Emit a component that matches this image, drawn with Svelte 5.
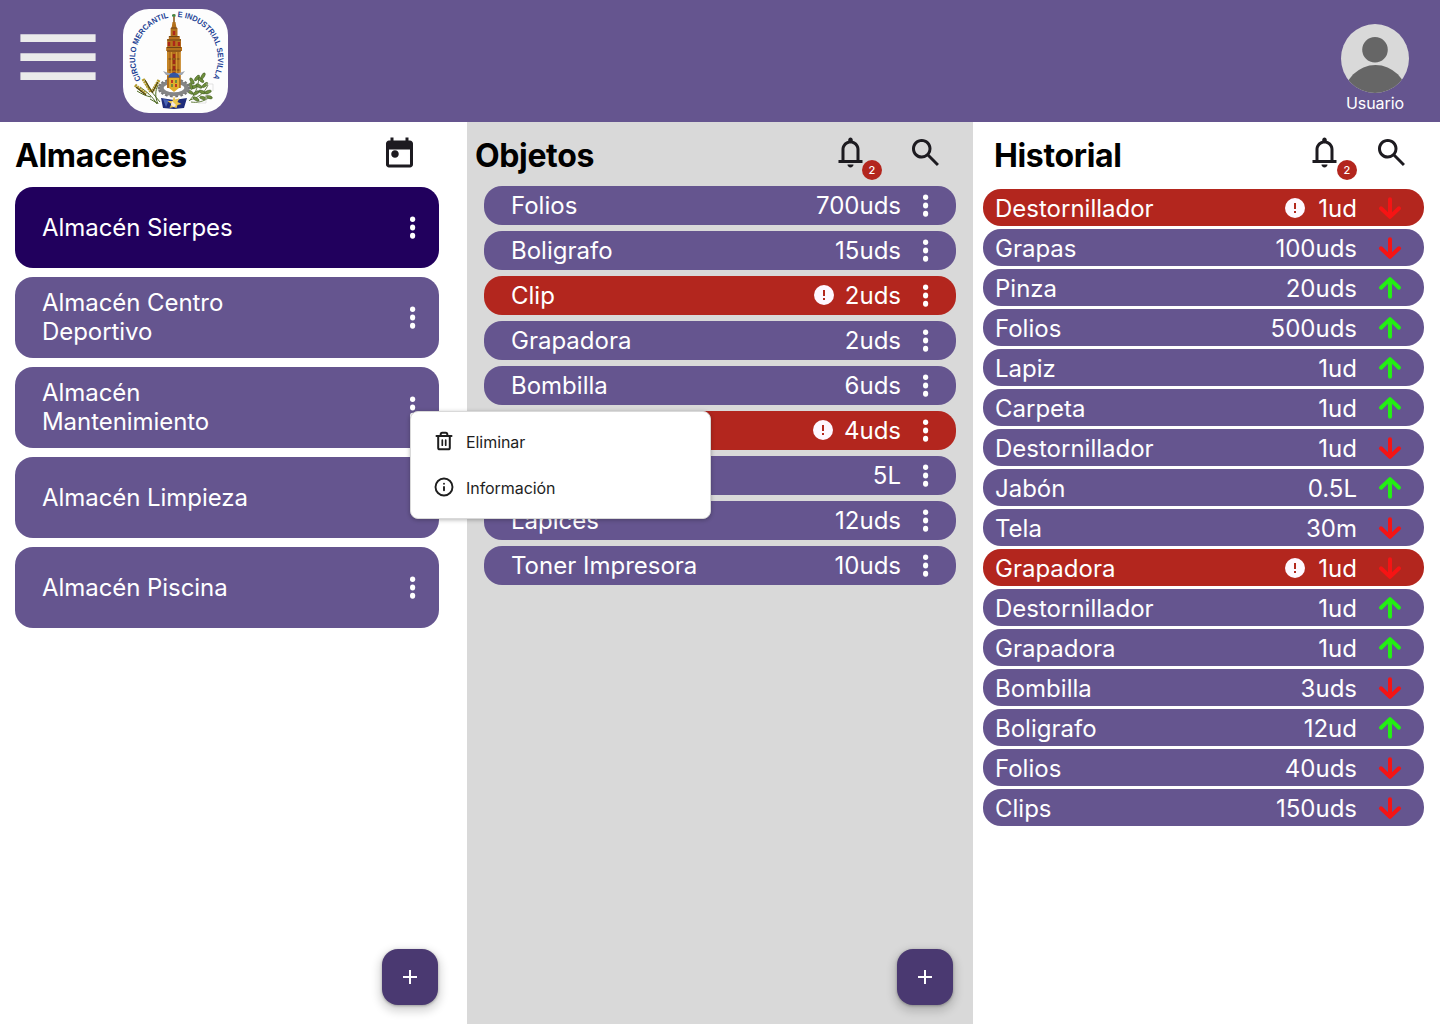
<script>
  const stores = [
    { name: 'Almacén Sierpes', active: true },
    { name: 'Almacén Centro Deportivo' },
    { name: 'Almacén Mantenimiento' },
    { name: 'Almacén Limpieza' },
    { name: 'Almacén Piscina' }
  ];
  const items = [
    ['Folios', '700uds'],
    ['Boligrafo', '15uds'],
    ['Clip', '2uds', true],
    ['Grapadora', '2uds'],
    ['Bombilla', '6uds'],
    ['', '4uds', true],
    ['', '5L'],
    ['Lapices', '12uds'],
    ['Toner Impresora', '10uds']
  ];
  const history = [
    ['Destornillador', '1ud', 'down', true],
    ['Grapas', '100uds', 'down'],
    ['Pinza', '20uds', 'up'],
    ['Folios', '500uds', 'up'],
    ['Lapiz', '1ud', 'up'],
    ['Carpeta', '1ud', 'up'],
    ['Destornillador', '1ud', 'down'],
    ['Jabón', '0.5L', 'up'],
    ['Tela', '30m', 'down'],
    ['Grapadora', '1ud', 'down', true],
    ['Destornillador', '1ud', 'up'],
    ['Grapadora', '1ud', 'up'],
    ['Bombilla', '3uds', 'down'],
    ['Boligrafo', '12ud', 'up'],
    ['Folios', '40uds', 'down'],
    ['Clips', '150uds', 'down']
  ];
  const teeth = Array.from({ length: 18 }, (_, i) => i * 20);
  const leaves = [
    [69, 72, 60], [74, 69, -50], [78, 71, 40], [71, 78, -20], [76, 77, 30], [82, 76, -40],
    [67, 83, 30], [73, 84, -30], [79, 83, 20], [85, 83, -20], [80, 89, 15], [73, 90, 30],
    [86, 88, 20], [68, 77, 80], [80, 67, -60]
  ];
</script>

{#snippet dots()}
  <svg class="dots" width="8" height="24" viewBox="0 0 8 24" fill="#fff">
    <ellipse cx="3.6" cy="3.3" rx="2.6" ry="2.7" />
    <ellipse cx="3.6" cy="11.6" rx="2.6" ry="3" />
    <ellipse cx="3.6" cy="19.8" rx="2.6" ry="3" />
  </svg>
{/snippet}

{#snippet alert()}
  <svg class="alert" width="24" height="24" viewBox="0 0 24 24">
    <circle cx="12" cy="12" r="10" fill="#fef7ff" />
    <path d="M11 7h2v6h-2zM11 15h2v2h-2z" fill="#b3261e" />
  </svg>
{/snippet}

{#snippet tools()}
  <div class="tools">
    <div class="bell">
      <svg width="36" height="36" viewBox="-.33 -.33 24 24" fill="#1d1b20">
        <path d="M4 19v-2h2v-7c0-1.38.42-2.61 1.25-3.69C8.08 5.24 9.17 4.53 10.5 4.2v-.7c0-.42.15-.77.44-1.06.29-.29.64-.44 1.06-.44s.77.15 1.06.44c.29.29.44.64.44 1.06v.7c1.33.33 2.42 1.04 3.25 2.11C17.58 7.39 18 8.62 18 10v7h2v2H4Zm8 3c-.55 0-1.02-.2-1.41-.59C10.2 21.02 10 20.55 10 20h4c0 .55-.2 1.02-.59 1.41-.39.39-.86.59-1.41.59ZM8 17h8v-7c0-1.1-.39-2.04-1.18-2.83C14.04 6.39 13.1 6 12 6s-2.04.39-2.83 1.17C8.39 7.96 8 8.9 8 10v7Z" />
      </svg>
      <span class="badge">2</span>
    </div>
    <svg class="search" width="36" height="36" viewBox="-.33 -.33 24 24" fill="#1d1b20">
      <path d="m19.6 21-6.3-6.3A6.1 6.1 0 0 1 9.5 16c-1.82 0-3.35-.63-4.61-1.89S3 11.32 3 9.5s.63-3.35 1.89-4.61S7.68 3 9.5 3s3.35.63 4.61 1.89S16 7.68 16 9.5a6.1 6.1 0 0 1-1.3 3.8l6.3 6.3-1.4 1.4ZM9.5 14c1.25 0 2.31-.44 3.19-1.31C13.56 11.81 14 10.75 14 9.5s-.44-2.31-1.31-3.19C11.81 5.44 10.75 5 9.5 5s-2.31.44-3.19 1.31C5.44 7.19 5 8.25 5 9.5s.44 2.31 1.31 3.19C7.19 13.56 8.25 14 9.5 14Z" />
    </svg>
  </div>
{/snippet}

{#snippet fab()}
  <button class="fab" aria-label="Añadir">
    <svg width="24" height="24" viewBox="0 0 24 24"><path d="M11 5h2v6h6v2h-6v6h-2v-6H5v-2h6z" fill="#fff" /></svg>
  </button>
{/snippet}

<div class="app">
  <header>
    <svg class="burger" width="76" height="46" viewBox="0 0 76 46" fill="#ebebeb">
      <path d="M.4.2h75.2v7.7H.4zM.4 19.2h75.2v7.7H.4zM.4 38.2h75.2v7.7H.4z" />
    </svg>
    <div class="logo">
      <svg width="105" height="104" viewBox="0 0 105 104">
        <defs>
          <path id="arc-left" d="M18 70.6A41.4 41.4 0 0 1 46.6 8.6" />
          <path id="arc-right" d="M54.6 8.2A41.4 41.4 0 0 1 89.2 70.4" />
        </defs>
        <g font-family="Liberation Sans, sans-serif" font-weight="700" font-size="8" fill="#1c3f94">
          <text textLength="79" lengthAdjust="spacingAndGlyphs"><textPath href="#arc-left">CIRCULO MERCANTIL</textPath></text>
          <text textLength="84" lengthAdjust="spacingAndGlyphs"><textPath href="#arc-right">E INDUSTRIAL SEVILLA</textPath></text>
        </g>
        <!-- wheat on the left -->
        <g fill="none" stroke="#4e6a22" stroke-width="1">
          <path d="M17 78c7 5 12 9 17 17M23 75c5 7 9 12 14 18M35 76c-3 6-3 12 0 19M27 90l7 4M14 82c5 3 9 5 14 6" />
          <path d="M12 76l11 9M20 70l8 13M36 71l-7 12" stroke="#b39a2a" stroke-width="3.2" stroke-dasharray="2 .6" />
          <path d="M13 78l10 8M22 71l7 12M35 73l-6 11" stroke="#4b4312" stroke-width="1.1" />
        </g>
        <!-- olive branch on the right -->
        <path d="M66 92c5-5 9-12 10-24M67 91c7-2 14-6 18-15M68 93c6 1 12 0 19-5" fill="none" stroke="#55702b" stroke-width=".9" />
        {#each leaves as [x, y, r]}
          <ellipse cx={x} cy={y} rx="3.5" ry="1.5" transform="rotate({r} {x} {y})" fill="#6f8f3c" stroke="#3c5720" stroke-width=".5" />
        {/each}
        <path d="M83 75h7v7M88 86h-5v8h-8" fill="none" stroke="#d3d3d3" stroke-width=".6" />
        <!-- gear -->
        <g fill="#777">
          {#each teeth as a}
            <rect x="-1.4" y="-1.8" width="2.8" height="3.6" transform="translate({51 + 14.5 * Math.cos((a * Math.PI) / 180)} {79 + 7.6 * Math.sin((a * Math.PI) / 180)}) rotate({a + 90})" />
          {/each}
        </g>
        <ellipse cx="51" cy="79" rx="12.3" ry="6.2" fill="#fff" stroke="#858585" stroke-width="3.8" />
        <!-- tower -->
        <path d="M50.2 5h1.6v10h-1.6z" fill="#8b5a19" />
        <path d="M49 5.5h3.6v2H49z" fill="#3d8c4b" />
        <path d="M49.5 13h3l1 6h1v8h2.3v3h1.2v8h1v4h-1.2v37H44V42h-.8v-4h1v-8h1.6v-3h1.8v-8h1z" fill="#b4711c" />
        <path d="M48 19h6M46 27.5h10M44 31h14M44 38.5h14M44 42h14M45 50h12M45 61h12" stroke="#704316" stroke-width="1" />
        <path d="M45 43v24M57 43v24M48.4 43v22M53.6 43v22" stroke="#e0a33a" stroke-width=".8" />
        <path d="M51 22v4M46 33v4M51 32v5M56 33v4" stroke="#ad2719" stroke-width="2.4" />
        <path d="M51 45v20" stroke="#9d2a18" stroke-width="2.6" stroke-dasharray="4 2" />
        <path d="M40 62q11 5 22 0l-3 4H43z" fill="#9ea5b1" />
        <path d="M47 65q4-3 8 0l2 3.5H45z" fill="#3156a5" />
        <path d="M46 69h10v10l-5 4-5-4z" fill="#e0ae2e" />
        <path d="M48 71h2v3h-2zM52 75h2v3h-2z" fill="#bd3a24" />
        <path d="M52 71h2v3h-2zM48 75h2v3h-2z" fill="#728b3b" />
        <!-- book -->
        <path d="M38 89l13 2 13-2-3 10-10 1-11-1z" fill="#1f2c7a" />
        <path d="M40 90l6 1-3 7z" fill="#4863b4" />
        <path d="M51 87l1.5 4 4-2-2 4 4 2-4 1-1 3-3-1-4 1 2-4-4-3 5 0z" fill="#edc64a" />
        <path d="M49 92l4 4-2 2-3-2z" fill="#f4e6e0" />
      </svg>
    </div>
    <div class="user">
      <svg width="68" height="69" viewBox="0 0 68 69">
        <defs><clipPath id="avatar"><ellipse cx="34" cy="34.5" rx="34" ry="34.5" /></clipPath></defs>
        <g clip-path="url(#avatar)">
          <rect width="68" height="69" fill="#d9d9d9" />
          <circle cx="34" cy="25.7" r="12.8" fill="#666" />
          <ellipse cx="34.5" cy="73" rx="31.5" ry="32" fill="#666" />
        </g>
      </svg>
      <span>Usuario</span>
    </div>
  </header>

  <main>
    <section class="stores">
      <div class="head">
        <h2>Almacenes</h2>
        <svg class="calendar" width="36" height="36" viewBox="-.33 -.33 24 24" fill="#1d1b20">
          <path d="M9 15.5c-.7 0-1.29-.24-1.78-.72A2.4 2.4 0 0 1 6.5 13c0-.7.24-1.29.72-1.78A2.4 2.4 0 0 1 9 10.5c.7 0 1.29.24 1.78.72.48.49.72 1.08.72 1.78s-.24 1.29-.72 1.78c-.49.48-1.08.72-1.78.72ZM5 22c-.55 0-1.02-.2-1.41-.59A1.93 1.93 0 0 1 3 20V6c0-.55.2-1.02.59-1.41C3.98 4.2 4.45 4 5 4h1V2h2v2h8V2h2v2h1c.55 0 1.02.2 1.41.59.39.39.59.86.59 1.41v14c0 .55-.2 1.02-.59 1.41-.39.39-.86.59-1.41.59H5Zm0-2h14V10H5v10Z" />
        </svg>
      </div>
      <div class="list">
        {#each stores as s}
          <div class="card" class:active={s.active}>
            <span class="name">{s.name}</span>
            {@render dots()}
          </div>
        {/each}
      </div>
      {@render fab()}
    </section>

    <section class="items">
      <div class="head"><h2>Objetos</h2>{@render tools()}</div>
      <div class="list">
        {#each items as [name, qty, low]}
          <div class="row" class:low>
            <span class="name">{name}</span>
            {#if low}{@render alert()}{/if}
            <span class="qty">{qty}</span>
            {@render dots()}
          </div>
        {/each}
      </div>
      {@render fab()}
    </section>

    <section class="history">
      <div class="head"><h2>Historial</h2>{@render tools()}</div>
      <div class="list">
        {#each history as [name, qty, dir, low]}
          <div class="row" class:low>
            <span class="name">{name}</span>
            {#if low}{@render alert()}{/if}
            <span class="qty">{qty}</span>
            <svg class="arrow {dir}" width="24" height="24" viewBox="0 0 24 24">
              <path d="M12 3.3v17.2M3 12.3l9 8.6 9-8.6" />
            </svg>
          </div>
        {/each}
      </div>
    </section>
  </main>

  <div class="menu">
    <div class="option">
      <svg width="20" height="20" viewBox="0 0 20 20" fill="none" stroke="#1e1e1e" stroke-width="2" stroke-linecap="round" stroke-linejoin="round">
        <path d="M2.5 5h15M15.8 5v11.7c0 .9-.7 1.6-1.6 1.6H5.8c-.9 0-1.6-.7-1.6-1.6V5M6.7 5V3.3c0-.9.7-1.6 1.6-1.6h3.4c.9 0 1.6.7 1.6 1.6V5" />
        <path d="M8.3 9.2v5M11.7 9.2v5" stroke-width="1.7" />
      </svg>
      <span>Eliminar</span>
    </div>
    <div class="option">
      <svg width="20" height="20" viewBox="0 0 20 20" fill="none" stroke="#1e1e1e" stroke-width="1.9" stroke-linecap="round">
        <circle cx="10" cy="10" r="8.5" />
        <path d="M10 13.3V10M10 6.7h.01" />
      </svg>
      <span>Información</span>
    </div>
  </div>
</div>

<style>
  :global(body) { margin: 0; background: #fff; }
  .app {
    position: relative;
    width: 1440px;
    height: 1024px;
    overflow: hidden;
    display: flex;
    flex-direction: column;
    font-family: Inter, sans-serif;
    background: #fff;
  }
  svg { display: block; flex: none; }
  header {
    height: 122px;
    flex: none;
    box-sizing: border-box;
    padding: 9px 31px 0 20px;
    display: flex;
    align-items: flex-start;
    background: #65558f;
  }
  .burger { margin-top: 25px; }
  .logo { width: 105px; height: 104px; margin-left: 27px; border-radius: 26px; background: #fdfdfd; overflow: hidden; }
  .user { margin: 15px 0 0 auto; display: flex; flex-direction: column; align-items: center; color: #fff; font-size: 16px; line-height: 20px; letter-spacing: -0.05px; }
  main { flex: 1; display: grid; grid-template-columns: 467px 506px 467px; }
  section { display: flex; flex-direction: column; box-sizing: border-box; }
  .head { display: flex; height: 64px; align-items: flex-start; justify-content: space-between; }
  h2 { margin: 14px 0 0; font-size: 32px; line-height: 39px; font-weight: 700; letter-spacing: -0.36px; color: #000; }
  .list { display: flex; flex-direction: column; }
  .name { flex: 1; }

  .stores { padding: 0 28px 19px 15px; }
  .stores .head { height: 65px; }
  .calendar { margin: 12px 22px 0 0; }
  .stores .list { gap: 9px; }
  .card {
    height: 81px;
    box-sizing: border-box;
    padding: 0 22px 0 27px;
    display: flex;
    align-items: center;
    border-radius: 18px;
    background: #65558f;
    color: #fff;
    font-size: 24px;
    line-height: 29px;
    letter-spacing: -0.06px;
  }
  .card.active { background: #21005d; }
  .card .name { flex: none; width: 220px; margin-right: auto; padding-bottom: 1px; }

  .items { background: #d9d9d9; padding: 0 17px 19px; }
  .items .head { margin-left: -9px; }
  .items .list { gap: 6px; }
  .row {
    display: flex;
    align-items: center;
    box-sizing: border-box;
    color: #fff;
    background: #65558f;
    font-size: 24px;
    line-height: 29px;
    border-radius: 18px;
  }
  .row.low { background: #b3261e; }
  .alert { margin-right: 9px; }
  .items .row { height: 39px; padding: 0 26px 0 27px; }
  .items .alert { margin-top: -1px; }
  .items .dots { margin-left: 21px; }

  .history { padding: 0 16px 0 10px; }
  .history .head { height: 67px; margin-left: 11px; }
  .history .list { gap: 3px; }
  .history .row { height: 37px; padding: 2px 22px 0 12px; }
  .history .alert { margin-top: -2px; margin-right: 11px; }
  .arrow { margin: -1px 0 0 21px; fill: none; stroke: #f51414; stroke-width: 4; stroke-linecap: round; stroke-linejoin: round; }
  .arrow.up { stroke: #23f014; transform: rotate(180deg); }

  .tools { display: flex; margin-top: 12px; }
  .bell { position: relative; margin-right: 39px; }
  .badge {
    position: absolute;
    left: 30px;
    top: 26px;
    width: 20px;
    height: 20px;
    border-radius: 50%;
    background: #b3261e;
    color: #fff;
    font-size: 11px;
    line-height: 20px;
    text-align: center;
    font-weight: 500;
  }
  .items .search { margin-right: 13px; }
  .history .search { margin-right: 15px; }
  .history .bell { margin-right: 31px; }
  .history .badge { left: 31px; }

  .fab {
    margin: auto 1px 0 auto;
    width: 56px;
    height: 56px;
    padding: 0;
    border: 0;
    border-radius: 16px;
    background: #4a3971;
    display: grid;
    place-items: center;
    box-shadow: 0 1px 3px rgba(0, 0, 0, 0.3), 0 4px 8px 3px rgba(0, 0, 0, 0.15);
  }
  .items .fab { margin-right: 3px; }

  .menu {
    position: absolute;
    left: 410px;
    top: 411px;
    width: 301px;
    height: 108px;
    box-sizing: border-box;
    padding: 7px 23px;
    border: 1px solid #d9d9d9;
    border-radius: 8px;
    background: #fff;
    box-shadow: 0 1px 4px rgba(12, 12, 13, 0.3);
  }
  .option { display: flex; gap: 12px; align-items: center; height: 46px; font-size: 16px; line-height: 22px; letter-spacing: -0.06px; color: #1e1e1e; }
  .option svg { margin-top: -2px; }
</style>
